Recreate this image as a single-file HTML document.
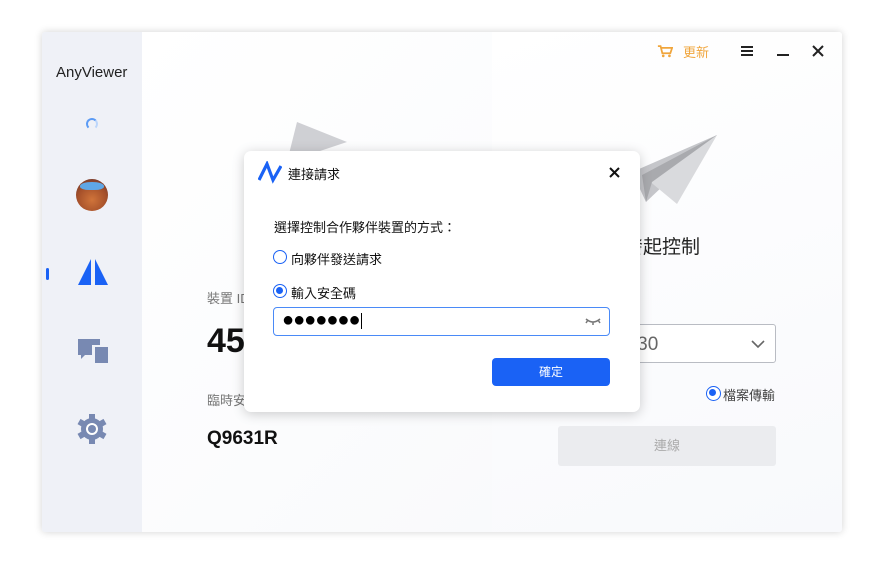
<!DOCTYPE html>
<html><head><meta charset="utf-8"><style>
*{margin:0;padding:0;box-sizing:border-box}
body{width:886px;height:567px;background:#fff;position:relative;overflow:hidden;font-family:"Liberation Sans","Noto Sans CJK TC",sans-serif;color:#222}
.win{position:absolute;left:42px;top:32px;width:800px;height:500px;background:#fff;box-shadow:0 0 8px rgba(0,0,0,.18);border-radius:3px;overflow:hidden}
.side{position:absolute;left:0;top:0;width:100px;height:500px;background:#eff1f7}
.lp{position:absolute;left:100px;top:0;width:350px;height:500px;background:linear-gradient(135deg,#fff 0%,#f9fafc 100%)}
.rp{position:absolute;left:450px;top:0;width:350px;height:500px;background:linear-gradient(160deg,#fff 0%,#f8f9fc 100%)}
.abs{position:absolute}
.dlg{position:absolute;left:244px;top:151px;width:396px;height:261px;background:#fff;border-radius:7px;box-shadow:0 2px 12px rgba(0,0,0,.2)}
.radio{position:absolute;width:14px;height:14px;border:1.5px solid #1a62f5;border-radius:50%;background:#fff}
.radio.on::after{content:"";position:absolute;left:2px;top:2px;width:7px;height:7px;border-radius:50%;background:#1a62f5}
</style></head><body>
<div class="win">
<div class="side">
 <div class="abs" style="left:14px;top:32px;font-size:15px;color:#222">AnyViewer</div>
 <div class="abs" style="left:44px;top:86px;width:12px;height:12px;border:2px solid #5b9bf5;border-bottom-color:transparent;border-right-color:#bcd6fb;border-radius:50%"></div>
 <div class="abs" style="left:34px;top:147px;width:32px;height:32px;border-radius:50%;background:radial-gradient(circle at 50% 65%,#d0743a 0%,#a5502a 55%,#5b3030 100%);overflow:hidden"><div style="position:absolute;left:4px;top:3px;width:24px;height:8px;border-radius:50% 50% 40% 40%;background:#5fa7e6"></div></div>
 <div class="abs" style="left:4px;top:236px;width:3px;height:12px;background:#1a62f5;border-radius:2px"></div>
 <svg class="abs" style="left:35px;top:226px" width="32" height="28"><polygon points="14,1 14,27 1,27" fill="#1a62f5"/><polygon points="18,1 18,27 31,27" fill="#1a62f5"/></svg>
 <svg class="abs" style="left:36px;top:307px" width="32" height="25"><path d="M0 0H22V6H14V16H7L3 20V16H0Z" fill="#7889b2"/><rect x="17" y="8" width="13" height="16" fill="#7889b2"/></svg>
 <svg class="abs" style="left:34px;top:381px" width="32" height="32" viewBox="0 0 32 32"><g fill="#7889b2"><circle cx="16" cy="16" r="11"/><g id="t"><rect x="13" y="1" width="6" height="6"/><rect x="13" y="25" width="6" height="6"/></g><use href="#t" transform="rotate(60 16 16)"/><use href="#t" transform="rotate(120 16 16)"/></g><circle cx="16" cy="16" r="6" fill="#fff"/><circle cx="16" cy="16" r="4" fill="#7889b2"/></svg>
</div>
<div class="lp">
 <svg class="abs" style="left:145px;top:90px" width="70" height="40"><polygon points="10,0 60,20 0,40" fill="#cfd0d4"/></svg>
 <div class="abs" style="left:65px;top:256px;font-size:13px;color:#777">裝置 ID</div>
 <div class="abs" style="left:65px;top:290px;font-size:34px;font-weight:bold;color:#111">4589</div>
 <div class="abs" style="left:65px;top:358px;font-size:13px;color:#777">臨時安全碼</div>
 <div class="abs" style="left:65px;top:396px;font-size:19px;font-weight:bold;color:#111">Q9631R</div>
</div>
<div class="rp">
 <svg class="abs" style="left:165px;top:12px" width="16" height="14" viewBox="0 0 18 15"><path d="M1 2H4L6 10H15L17 4H5" fill="none" stroke="#f0a53c" stroke-width="2"/><circle cx="7" cy="13" r="1.5" fill="#f0a53c"/><circle cx="14" cy="13" r="1.5" fill="#f0a53c"/></svg>
 <div class="abs" style="left:191px;top:10px;font-size:13px;color:#f0a53c">更新</div>
 <div class="abs" style="left:249px;top:14px;width:12px;height:2px;background:#222;box-shadow:0 4px 0 #222,0 8px 0 #222"></div>
 <div class="abs" style="left:285px;top:22px;width:12px;height:2px;background:#222"></div>
 <svg class="abs" style="left:320px;top:13px" width="12" height="12"><path d="M1 1L11 11M11 1L1 11" stroke="#222" stroke-width="2"/></svg>
 <svg class="abs" style="left:140px;top:100px" width="90" height="75"><polygon points="85,3 0,40 14,70" fill="#c5c6ca"/><polygon points="85,3 10,43 45,72" fill="#d9dadd"/><polygon points="85,3 10,43 14,70 20,50" fill="#a9aaae"/></svg>
 <div class="abs" style="left:132px;top:200px;font-size:19px;color:#222">發起控制</div>
 <div class="abs" style="left:66px;top:292px;width:218px;height:39px;border:1px solid #b9bcc3;border-radius:3px;background:#fff"></div>
 <div class="abs" style="left:124px;top:302px;font-size:19px;color:#666">9630</div>
 <svg class="abs" style="left:259px;top:308px" width="14" height="9"><path d="M1 1L7 7L13 1" fill="none" stroke="#666" stroke-width="1.6"/></svg>
 <div class="radio on" style="left:214px;top:354px;width:15px;height:15px"></div>
 <div class="abs" style="left:231px;top:353px;font-size:13px;color:#444">檔案傳輸</div>
 <div class="abs" style="left:66px;top:394px;width:218px;height:40px;background:#ebecef;border-radius:3px;font-size:13px;color:#aaa;text-align:center;line-height:40px">連線</div>
</div>
</div>
<div class="dlg">
 <svg class="abs" style="left:14px;top:10px" width="24" height="24" viewBox="0 0 24 24"><path d="M1 19L9 3L15 19L23 5" fill="none" stroke="#1a62f5" stroke-width="3.2" stroke-linejoin="miter"/></svg>
 <div class="abs" style="left:44px;top:13px;font-size:13px;color:#111">連接請求</div>
 <svg class="abs" style="left:365px;top:16px" width="11" height="11"><path d="M1 1L10 10M10 1L1 10" stroke="#111" stroke-width="2"/></svg>
 <div class="abs" style="left:30px;top:66px;font-size:13px;color:#111">選擇控制合作夥伴裝置的方式：</div>
 <div class="radio" style="left:29px;top:99px"></div>
 <div class="abs" style="left:47px;top:98px;font-size:13px;color:#111">向夥伴發送請求</div>
 <div class="radio on" style="left:29px;top:133px"></div>
 <div class="abs" style="left:47px;top:132px;font-size:13px;color:#111">輸入安全碼</div>
 <div class="abs" style="left:29px;top:156px;width:337px;height:29px;border:1px solid #4a8af7;border-radius:4px"></div>
 <div class="abs" style="left:38px;top:158px;font-size:20px;color:#000;letter-spacing:-1px">●●●●●●●</div>
 <div class="abs" style="left:117px;top:162px;width:1px;height:16px;background:#000"></div>
 <svg class="abs" style="left:341px;top:166px" width="16" height="8"><path d="M1 2Q8 8 15 2M3 3L1 6M8 5V8M13 3L15 6" fill="none" stroke="#777" stroke-width="1.5"/></svg>
 <div class="abs" style="left:248px;top:207px;width:118px;height:28px;background:#1a62f5;border-radius:4px;color:#fff;font-size:12px;text-align:center;line-height:28px">確定</div>
</div>
</body></html>
